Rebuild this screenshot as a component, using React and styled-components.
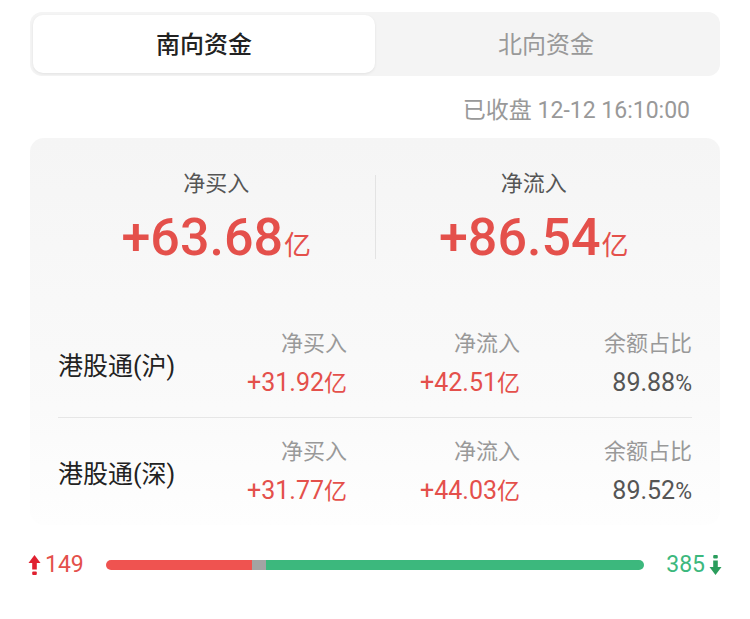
import React from 'react';
import styled, { createGlobalStyle } from 'styled-components';

const GlobalStyle = createGlobalStyle`
    body {
        margin: 0;
        background: #fff;
        font-family: Roboto, "Noto Sans CJK SC", sans-serif;
    }
`;

const Page = styled.div`
    width: 750px;
    padding: 12px 30px 0;
    box-sizing: border-box;
`;

const Tabs = styled.div`
    display: flex;
    background: #f4f4f4;
    border-radius: 12px;
    padding: 3px;
    height: 64px;
    box-sizing: border-box;
`;

const Tab = styled.div`
    flex: 1;
    display: flex;
    align-items: center;
    justify-content: center;
    padding-bottom: 3px;
    border-radius: 10px;
    font-size: 24px;
    background: ${(p) => (p.$active ? '#fff' : 'transparent')};
    color: ${(p) => (p.$active ? '#222' : '#999')};
    font-weight: ${(p) => (p.$active ? 500 : 400)};
    box-shadow: ${(p) => (p.$active ? '0 1px 3px rgba(0,0,0,0.08)' : 'none')};
`;

const Status = styled.div`
    text-align: right;
    padding: 20px 30px 0 0;
    height: 50px;
    box-sizing: border-box;
    font-size: 23px;
    line-height: 30px;
    color: #999;
`;

const Card = styled.section`
    margin-top: 12px;
    border-radius: 14px;
    background: linear-gradient(#f5f5f5, #fafafa 70%, #fefefe);
    padding: 0 28px;
`;

const Summary = styled.div`
    display: flex;
    align-items: center;
    padding: 31px 0 45px;
`;

const SummaryCell = styled.div`
    flex: 1;
    text-align: center;
`;

const SummaryDivider = styled.div`
    width: 1px;
    height: 84px;
    background: #e3e3e3;
`;

const SummaryLabel = styled.div`
    font-size: 22px;
    color: #555;
    line-height: 30px;
    height: 30px;
`;

const BigValue = styled.div`
    margin-top: 12px;
    color: #e4504b;
    font-size: 52px;
    font-weight: 500;
    line-height: 54px;
    height: 54px;
    span {
        font-size: 27px;
        font-weight: 400;
        margin-left: 1px;
    }
`;

const Row = styled.div`
    display: grid;
    grid-template-columns: 1fr 130px 173px 172px;
    align-items: center;
    padding: 19px 0;
    border-bottom: ${(p) => (p.$last ? 'none' : '1px solid #e6e6e6')};
`;

const RowName = styled.div`
    font-size: 25px;
    color: #222;
`;

const Stat = styled.div`
    text-align: right;
`;

const StatLabel = styled.div`
    font-size: 22px;
    color: #999;
    line-height: 30px;
    height: 30px;
`;

const StatValue = styled.div`
    margin-top: 9px;
    font-size: 25px;
    line-height: 30px;
    height: 30px;
    color: ${(p) => (p.$red ? '#e4504b' : '#555')};
    span {
        font-size: 23px;
    }
`;

const BarRow = styled.div`
    display: flex;
    align-items: center;
    gap: 22px;
    margin: 28px -2px 0;
`;

const Count = styled.div`
    display: flex;
    align-items: center;
    gap: 4px;
    font-size: 23px;
    line-height: 24px;
    color: ${(p) => p.$color};
`;

const Bar = styled.div`
    flex: 1;
    display: flex;
    height: 10px;
    border-radius: 5px;
    overflow: hidden;
`;

const Seg = styled.div`
    background: ${(p) => p.$color};
`;

function Arrow({ down, color }) {
    return (
        <svg width="13" height="22" viewBox="0 0 13 22" style={{ transform: down ? 'rotate(180deg)' : 'none' }}>
            <path d="M6.5 1 L12.5 9 H8.8 V15.5 H4.2 V9 H0.5 Z" fill={color} />
            <rect x="4.2" y="17.5" width="4.6" height="3.5" rx="1" fill={color} />
        </svg>
    );
}

const rows = [
    { name: '港股通(沪)', buy: '+31.92', flow: '+42.51', ratio: '89.88' },
    { name: '港股通(深)', buy: '+31.77', flow: '+44.03', ratio: '89.52' },
];

export default function App() {
    const up = 149;
    const flat = 14;
    const down = 385;
    const total = up + flat + down;
    return (
        <Page>
            <GlobalStyle />
            <Tabs>
                <Tab $active>南向资金</Tab>
                <Tab>北向资金</Tab>
            </Tabs>
            <Status>已收盘 12-12 16:10:00</Status>
            <Card>
                <Summary>
                    <SummaryCell>
                        <SummaryLabel>净买入</SummaryLabel>
                        <BigValue>+63.68<span>亿</span></BigValue>
                    </SummaryCell>
                    <SummaryDivider />
                    <SummaryCell>
                        <SummaryLabel>净流入</SummaryLabel>
                        <BigValue>+86.54<span>亿</span></BigValue>
                    </SummaryCell>
                </Summary>
                {rows.map((r, i) => (
                    <Row key={r.name} $last={i === rows.length - 1}>
                        <RowName>{r.name}</RowName>
                        <Stat>
                            <StatLabel>净买入</StatLabel>
                            <StatValue $red>{r.buy}<span>亿</span></StatValue>
                        </Stat>
                        <Stat>
                            <StatLabel>净流入</StatLabel>
                            <StatValue $red>{r.flow}<span>亿</span></StatValue>
                        </Stat>
                        <Stat>
                            <StatLabel>余额占比</StatLabel>
                            <StatValue>{r.ratio}<span>%</span></StatValue>
                        </Stat>
                    </Row>
                ))}
            </Card>
            <BarRow>
                <Count $color="#e4504b">
                    <Arrow color="#e0202f" />
                    {up}
                </Count>
                <Bar>
                    <Seg $color="#ef5350" style={{ width: `${(up / total) * 100}%` }} />
                    <Seg $color="#a3a3a3" style={{ width: `${(flat / total) * 100}%` }} />
                    <Seg $color="#3cb87d" style={{ flex: 1 }} />
                </Bar>
                <Count $color="#3cb87d">
                    {down}
                    <Arrow down color="#2a9d5c" />
                </Count>
            </BarRow>
        </Page>
    );
}
